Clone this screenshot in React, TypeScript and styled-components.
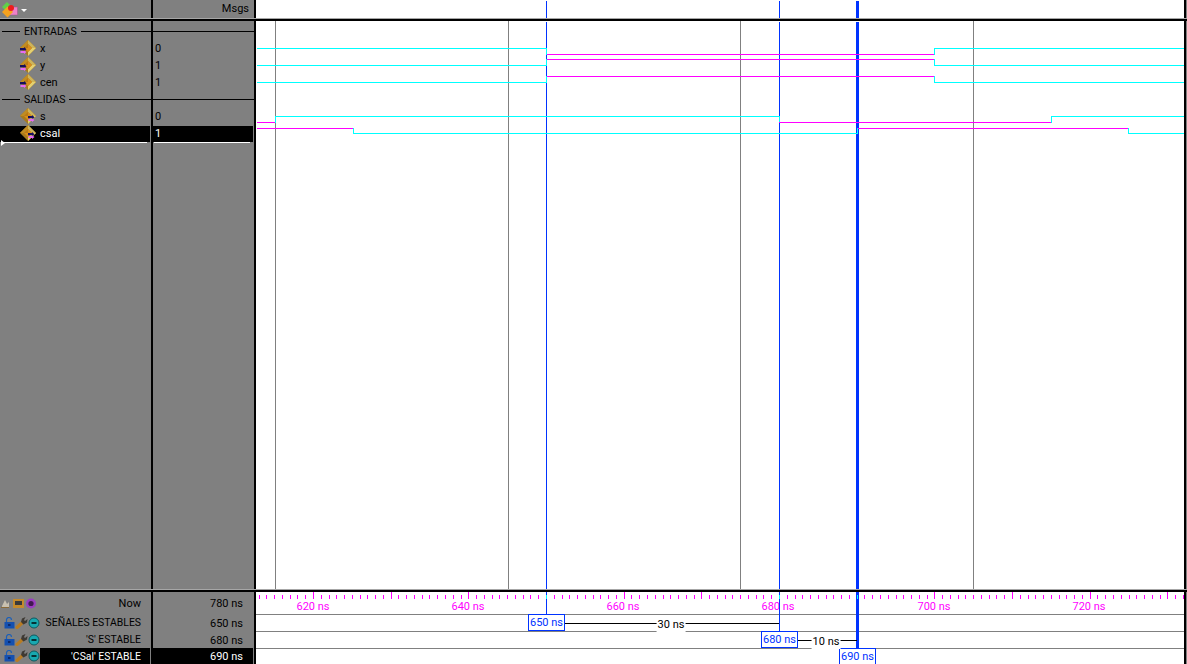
import styled, { createGlobalStyle } from 'styled-components';

const GRAY = '#808080';
const BLUE = '#0033ff';
const CYAN = '#00ffff';
const MAGENTA = '#ff00ff';

// all wave coordinates are relative to the left edge of the wave pane (x = 256 on screen)
const WAVE_WIDTH = 928;
const BODY_HEIGHT = 568;
const FOOT_HEIGHT = 72;
const PX_PER_NS = 7.767;
const xAt = (ns: number) => Math.round(290 + (ns - 650) * PX_PER_NS);

const CURSORS = [
  { x: 290, w: 1, end: 23 },
  { x: 523, w: 1, end: 40 },
  { x: 601, w: 3, end: 57 },
];
const MARKERS = [19, 252, 484, 717];

type Segment = { from: number; to: number; y: number; color: string };

const high = (from: number, to: number, y: number): Segment => ({ from, to, y, color: MAGENTA });
const low = (from: number, to: number, y: number): Segment => ({ from, to, y, color: CYAN });

const SIGNALS: Segment[][] = [
  [low(1, 290, 27), high(291, 678, 33), low(679, 928, 27)],
  [low(1, 290, 44), high(291, 678, 38), low(678, 928, 44)],
  [low(1, 290, 61), high(291, 678, 55), low(678, 928, 61)],
  [high(1, 19, 101), low(20, 523, 95), high(523, 795, 101), low(795, 928, 95)],
  [high(1, 97, 107), low(97, 601, 112), high(602, 872, 107), low(872, 928, 112)],
];

const RULER_LABELS = [
  { ns: 620, x: 57 },
  { ns: 640, x: 212 },
  { ns: 660, x: 367 },
  { ns: 680, x: 522 },
  { ns: 700, x: 678 },
  { ns: 720, x: 833 },
];

const GlobalStyle = createGlobalStyle`
  html, body {
    margin: 0;
    padding: 0;
    background: ${GRAY};
  }
  body {
    font-family: Roboto, "Liberation Sans", Arial, sans-serif;
    font-size: 11px;
    color: #000;
  }
`;

const Shell = styled.div`
  width: 1187px;
  height: 664px;
  overflow: hidden;
  display: flex;
  flex-direction: column;
  background: ${GRAY};
`;

const Columns = styled.div<{ $height: number }>`
  display: flex;
  height: ${props => props.$height}px;
`;

const Rule = styled.div`
  height: 2px;
  flex: none;
  background: #000;
  border-top: 1px solid #a6a6a6;
`;

const NamePane = styled.div`
  width: 153px;
  flex: none;
  box-sizing: border-box;
  border-right: 2px solid #000;
  display: flex;
  flex-direction: column;
  min-height: 0;
`;

const ValuePane = styled.div`
  width: 103px;
  flex: none;
  box-sizing: border-box;
  border-right: 2px solid #000;
  display: flex;
  flex-direction: column;
  min-height: 0;
`;

const WavePane = styled.div`
  width: 930px;
  flex: none;
  box-sizing: border-box;
  border-right: 2px solid #000;
  background: #fff;
  position: relative;
`;

const HeadCell = styled.div`
  height: 18px;
  display: flex;
  align-items: center;
  justify-content: flex-end;
  padding-right: 5px;
  line-height: 18px;
`;

const ProjectButton = styled.div`
  height: 18px;
  display: flex;
  align-items: center;
  gap: 3px;
  padding-left: 1px;
`;

const DropArrow = styled.span`
  width: 0;
  height: 0;
  margin-top: 2px;
  border-left: 3px solid transparent;
  border-right: 3px solid transparent;
  border-top: 3px solid #fff;
`;

const List = styled.div`
  padding-top: 2px;
  display: flex;
  flex-direction: column;
`;

const Row = styled.div<{ $selected?: boolean }>`
  height: 17px;
  display: flex;
  align-items: center;
  gap: 4px;
  padding-left: 20px;
  padding-bottom: 2px;
  box-sizing: border-box;
  border-top: 1px solid ${props => (props.$selected ? GRAY : 'transparent')};
  margin-right: 1px;
  background-clip: padding-box;
  background-color: ${props => (props.$selected ? '#000' : 'transparent')};
  color: ${props => (props.$selected ? '#fff' : '#000')};
`;

const ValueRow = styled(Row)`
  padding-left: 2px;
`;

const Divider = styled.div`
  height: 17px;
  box-sizing: border-box;
  display: flex;
  align-items: center;
  padding: 0 0 1px 2px;
  gap: 4px;
  font-size: 10.5px;
`;

const DividerLine = styled.span<{ $width?: number }>`
  height: 1px;
  background: #000;
  ${props => (props.$width ? `width: ${props.$width}px;` : 'flex: 1;')}
`;

const ValueDivider = styled.div`
  height: 17px;
  box-sizing: border-box;
  padding-bottom: 1px;
  display: flex;
  align-items: center;
`;

const ScrollLine = styled.div<{ $left: number; $right: number }>`
  height: 1px;
  background: #fff;
  margin-left: ${props => props.$left}px;
  margin-right: ${props => props.$right}px;
  position: relative;
`;

const ScrollHandle = styled.span`
  position: absolute;
  left: -2px;
  top: -2px;
  width: 0;
  height: 0;
  border-top: 3px solid transparent;
  border-bottom: 3px solid transparent;
  border-left: 4px solid #fff;
`;

const Canvas = styled.svg`
  display: block;
  position: absolute;
  left: 0;
  top: 0;
`;

const IconStrip = styled.svg`
  display: block;
  flex: none;
`;

const NowRow = styled.div`
  height: 22px;
  flex: none;
  display: flex;
  align-items: center;
  justify-content: space-between;
  padding: 0 10px 0 1px;
`;

const CursorRow = styled.div<{ $height: number }>`
  height: ${props => props.$height}px;
  flex: none;
  display: flex;
  align-items: center;
  padding-left: 4px;
`;

const CursorName = styled.div<{ $selected?: boolean }>`
  flex: 1;
  height: 100%;
  display: flex;
  align-items: center;
  justify-content: flex-end;
  margin-right: 1px;
  padding-right: 9px;
  font-size: 10.4px;
  white-space: nowrap;
  background: ${props => (props.$selected ? '#000' : 'transparent')};
  color: ${props => (props.$selected ? '#fff' : '#000')};
`;

const FootValue = styled.div<{ $height: number; $selected?: boolean }>`
  height: ${props => props.$height}px;
  flex: none;
  display: flex;
  align-items: center;
  justify-content: flex-end;
  padding-right: 10px;
  margin-right: 1px;
  padding-top: 1px;
  box-sizing: border-box;
  background: ${props => (props.$selected ? '#000' : 'transparent')};
  color: ${props => (props.$selected ? '#fff' : '#000')};
`;

const RulerLabel = styled.span`
  position: absolute;
  top: 8px;
  transform: translateX(-50%);
  color: ${MAGENTA};
  line-height: 14px;
  white-space: nowrap;
`;

const CursorTag = styled.span<{ $top: number }>`
  position: absolute;
  top: ${props => props.$top}px;
  width: 37px;
  height: 17px;
  box-sizing: border-box;
  border: 1px solid ${BLUE};
  background: #fff;
  color: ${BLUE};
  display: flex;
  align-items: center;
  justify-content: center;
  white-space: nowrap;
`;

const Delta = styled.span<{ $top: number }>`
  position: absolute;
  top: ${props => props.$top}px;
  transform: translateX(-50%);
  padding: 0 1px;
  background: #fff;
  line-height: 15px;
  white-space: nowrap;
`;

function TopIcon() {
  return (
    <IconStrip width="17" height="17" viewBox="0 0 17 17">
      <path d="M6 1 L11 6 L6 11 L1 6 Z" fill="#5ed04a" />
      <rect x="8" y="6" width="8.5" height="8" fill="#ee82c8" stroke="#a0508a" strokeWidth="0.5" />
      <path d="M6.5 5.5 L12 11 L6.5 16.5 L1 11 Z" fill="#f6a21e" />
      <circle cx="10" cy="7" r="3" fill="#ee1c1c" />
    </IconStrip>
  );
}

function SignalIcon({ output }: { output?: boolean }) {
  return (
    <IconStrip width="16" height="16" viewBox="0 0 16 16">
      <path d="M8 0 L16 8 L8 16 L0 8 Z" fill="#a87a1c" />
      <path d="M8 0 L16 8 L12 8 L8 4 Z" fill="#cdb45a" />
      <path d="M16 8 L8 16 L8 12 L12 8 Z" fill="#e4d070" />
      <path d="M8 0 L0 8 L4 8 L8 4 Z" fill="#c08c22" />
      <path d="M8 4 L12 8 L8 12 L4 8 Z" fill="#d98e1c" />
      <path d="M8 4 L4 8 L8 8 Z" fill="#b87a14" />
      {output ? (
        <g>
          <path d="M8 8 H12 V7 L14.5 9.2 L12 11.4 V10.2 H8 Z" fill="#14105c" />
          <path d="M8.5 11 H12 V10.2 L14.5 12 L12 14 V13 H8.5 Z" fill="#e86cf0" />
        </g>
      ) : (
        <g>
          <path d="M0 8 H4 V7 L6.5 9.2 L4 11.4 V10.2 H0 Z" fill="#14105c" />
          <path d="M0.5 11 H4 V10.2 L6.5 12 L4 14 V13 H0.5 Z" fill="#e86cf0" />
        </g>
      )}
    </IconStrip>
  );
}

function NowIcons() {
  return (
    <IconStrip width="36" height="11" viewBox="0 0 36 11">
      <path d="M1 8 L4 2 L6 6 L8 4 V9 H1 Z" fill="#c8c0b0" />
      <path d="M0 9.5 H8" stroke="#8a6a3a" strokeWidth="1" />
      <rect x="12" y="1" width="11" height="9" fill="#c48a2c" />
      <rect x="14" y="3" width="7" height="4" fill="#3a3a3a" />
      <circle cx="30" cy="5.5" r="5" fill="#9a3fc0" />
      <circle cx="30" cy="5.5" r="2.6" fill="#401a50" />
    </IconStrip>
  );
}

function CursorIcons() {
  return (
    <IconStrip width="36" height="12" viewBox="0 0 36 12">
      <path d="M2.5 5 V3 a2.5 2.5 0 0 1 5 0" fill="none" stroke="#1c5fb8" strokeWidth="1.2" />
      <rect x="0.5" y="5" width="10" height="6.5" fill="#1450b0" />
      <rect x="4" y="7" width="2.5" height="2" fill="#0a2a70" />
      <path d="M13 10.5 L19 5" stroke="#b87c22" strokeWidth="3.2" strokeLinecap="round" />
      <path d="M17 5 L18 1.5 L21.5 0 L20 3 L21 4 L23.5 2 L23 5.5 L19.5 7.5 Z" fill="#3e3a34" />
      <circle cx="30" cy="6" r="5" fill="#18a8b0" stroke="#0e5a60" strokeWidth="1" />
      <path d="M27.5 6 H32.5" stroke="#042428" strokeWidth="1.8" />
    </IconStrip>
  );
}

function CursorLines({ top, bottom }: { top: number; bottom: number }) {
  return (
    <>
      {CURSORS.map(c => (
        <rect key={c.x} x={c.x - (c.w - 1) / 2} y={top} width={c.w} height={bottom - top} fill={BLUE} />
      ))}
    </>
  );
}

function WaveBody() {
  return (
    <Canvas width={WAVE_WIDTH} height={BODY_HEIGHT} shapeRendering="crispEdges">
      {MARKERS.map(x => (
        <rect key={x} x={x} y={0} width={1} height={BODY_HEIGHT} fill={GRAY} />
      ))}
      <CursorLines top={1} bottom={BODY_HEIGHT} />
      {SIGNALS.map((segments, i) => (
        <g key={i}>
          {segments.map((s, j) => {
            const prev = segments[j - 1];
            return (
              <g key={j}>
                {prev && (
                  <rect x={s.from - (s.from > prev.to ? 1 : 0)} y={Math.min(prev.y, s.y)} width={1} height={Math.abs(prev.y - s.y) + 1} fill={CYAN} />
                )}
                <rect x={s.from} y={s.y} width={s.to - s.from} height={1} fill={s.color} />
              </g>
            );
          })}
        </g>
      ))}
    </Canvas>
  );
}

function WaveFoot() {
  const ticks: number[] = [];
  for (let ns = 613; ns <= 734; ns++) ticks.push(ns);
  return (
    <>
      {RULER_LABELS.map(l => (
        <RulerLabel key={l.ns} style={{ left: l.x }}>
          {l.ns} ns
        </RulerLabel>
      ))}
      <Canvas width={WAVE_WIDTH} height={FOOT_HEIGHT} shapeRendering="crispEdges">
        {[22, 39, 56].map(y => (
          <rect key={y} x={0} y={y} width={WAVE_WIDTH} height={1} fill={GRAY} />
        ))}
        {CURSORS.map(c => (
          <rect key={c.x} x={c.x - (c.w - 1) / 2} y={0} width={c.w} height={c.end} fill={BLUE} />
        ))}
        {ticks.map(ns => {
          const major = ns % 10 === 0;
          const onCursor = ns === 650 || ns === 680 || ns === 690;
          return (
            <rect
              key={ns}
              x={xAt(ns)}
              y={major && !onCursor ? 0 : 3}
              width={1}
              height={major && !onCursor ? 7 : 4}
              fill={onCursor ? CYAN : MAGENTA}
            />
          );
        })}
        <rect x={309} y={31} width={214} height={1} fill="#000" />
        <rect x={542} y={48} width={59} height={1} fill="#000" />
      </Canvas>
      <CursorTag $top={22} style={{ left: 272 }}>650 ns</CursorTag>
      <CursorTag $top={39} style={{ left: 505 }}>680 ns</CursorTag>
      <CursorTag $top={56} style={{ left: 583 }}>690 ns</CursorTag>
      <Delta $top={25} style={{ left: 415 }}>30 ns</Delta>
      <Delta $top={42} style={{ left: 570 }}>10 ns</Delta>
    </>
  );
}

export default function App() {
  return (
    <Shell>
      <GlobalStyle />
      <Columns $height={18}>
        <NamePane>
          <ProjectButton>
            <TopIcon />
            <DropArrow />
          </ProjectButton>
        </NamePane>
        <ValuePane>
          <HeadCell>Msgs</HeadCell>
        </ValuePane>
        <WavePane>
          <Canvas width={WAVE_WIDTH} height={18} shapeRendering="crispEdges">
            <CursorLines top={1} bottom={18} />
          </Canvas>
        </WavePane>
      </Columns>
      <Rule />
      <Columns $height={BODY_HEIGHT}>
        <NamePane>
          <List>
            <Divider>
              <DividerLine $width={18} />
              <span>ENTRADAS</span>
              <DividerLine />
            </Divider>
            <Row><SignalIcon />x</Row>
            <Row><SignalIcon />y</Row>
            <Row><SignalIcon />cen</Row>
            <Divider>
              <DividerLine $width={18} />
              <span>SALIDAS</span>
              <DividerLine />
            </Divider>
            <Row><SignalIcon output />s</Row>
            <Row $selected><SignalIcon output />csal</Row>
          </List>
          <ScrollLine $left={3} $right={4}>
            <ScrollHandle />
          </ScrollLine>
        </NamePane>
        <ValuePane>
          <List>
            <ValueDivider><DividerLine /></ValueDivider>
            <ValueRow>0</ValueRow>
            <ValueRow>1</ValueRow>
            <ValueRow>1</ValueRow>
            <ValueDivider><DividerLine /></ValueDivider>
            <ValueRow>0</ValueRow>
            <ValueRow $selected>1</ValueRow>
          </List>
          <ScrollLine $left={1} $right={4} />
        </ValuePane>
        <WavePane>
          <WaveBody />
        </WavePane>
      </Columns>
      <Rule />
      <Columns $height={FOOT_HEIGHT}>
        <NamePane>
          <NowRow>
            <NowIcons />
            Now
          </NowRow>
          <CursorRow $height={17}>
            <CursorIcons />
            <CursorName>SEÑALES ESTABLES</CursorName>
          </CursorRow>
          <CursorRow $height={17}>
            <CursorIcons />
            <CursorName>'S' ESTABLE</CursorName>
          </CursorRow>
          <CursorRow $height={16}>
            <CursorIcons />
            <CursorName $selected>'CSal' ESTABLE</CursorName>
          </CursorRow>
        </NamePane>
        <ValuePane>
          <FootValue $height={22}>780 ns</FootValue>
          <FootValue $height={17}>650 ns</FootValue>
          <FootValue $height={17}>680 ns</FootValue>
          <FootValue $height={16} $selected>690 ns</FootValue>
        </ValuePane>
        <WavePane>
          <WaveFoot />
        </WavePane>
      </Columns>
    </Shell>
  );
}
